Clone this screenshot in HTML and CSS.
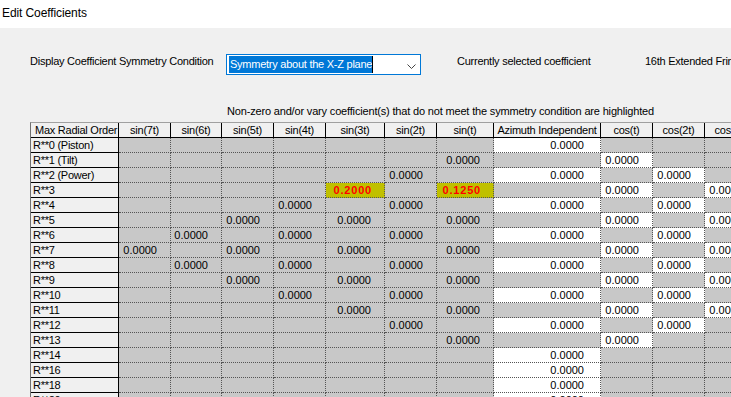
FILE: index.html
```html
<!DOCTYPE html>
<html>
<head>
<meta charset="utf-8">
<link rel="stylesheet" href="styles.css">
</head>
<body>
<div class="titlebar">Edit Coefficients</div>
<div class="toprow">
  <div class="lbl lbl-sym">Display Coefficient Symmetry Condition</div>
  <div class="combo">
    <span class="sel">Symmetry about the X-Z plane</span><span class="caret"></span>
    <svg class="chev" width="9" height="5" viewBox="0 0 9 5"><polyline points="0.5,0.5 4.5,4.5 8.5,0.5" fill="none" stroke="#444" stroke-width="1"/></svg>
  </div>
  <div class="lbl lbl-cur">Currently selected coefficient</div>
  <div class="lbl lbl-ext">16th Extended Fringe</div>
</div>
<div class="note">Non-zero and/or vary coefficient(s) that do not meet the symmetry condition are highlighted</div>
<div class="grid">
  <div class="ghead">
    <div>Max Radial Order</div><div>sin(7t)</div><div>sin(6t)</div><div>sin(5t)</div><div>sin(4t)</div><div>sin(3t)</div><div>sin(2t)</div><div>sin(t)</div><div>Azimuth Independent</div><div>cos(t)</div><div>cos(2t)</div><div>cos(3t)</div>
  </div>
  <div class="gbody">
    <div>R**0 (Piston)</div><div></div><div></div><div></div><div></div><div></div><div></div><div></div><div class="w">0.0000</div><div></div><div></div><div></div>
    <div>R**1 (Tilt)</div><div></div><div></div><div></div><div></div><div></div><div></div><div>0.0000</div><div></div><div class="w">0.0000</div><div></div><div></div>
    <div>R**2 (Power)</div><div></div><div></div><div></div><div></div><div></div><div>0.0000</div><div></div><div class="w">0.0000</div><div></div><div class="w">0.0000</div><div></div>
    <div>R**3</div><div></div><div></div><div></div><div></div><div class="h">0.2000</div><div></div><div class="h">0.1250</div><div></div><div class="w">0.0000</div><div></div><div class="w">0.0000</div>
    <div>R**4</div><div></div><div></div><div></div><div>0.0000</div><div></div><div>0.0000</div><div></div><div class="w">0.0000</div><div></div><div class="w">0.0000</div><div></div>
    <div>R**5</div><div></div><div></div><div>0.0000</div><div></div><div>0.0000</div><div></div><div>0.0000</div><div></div><div class="w">0.0000</div><div></div><div class="w">0.0000</div>
    <div>R**6</div><div></div><div>0.0000</div><div></div><div>0.0000</div><div></div><div>0.0000</div><div></div><div class="w">0.0000</div><div></div><div class="w">0.0000</div><div></div>
    <div>R**7</div><div>0.0000</div><div></div><div>0.0000</div><div></div><div>0.0000</div><div></div><div>0.0000</div><div></div><div class="w">0.0000</div><div></div><div class="w">0.0000</div>
    <div>R**8</div><div></div><div>0.0000</div><div></div><div>0.0000</div><div></div><div>0.0000</div><div></div><div class="w">0.0000</div><div></div><div class="w">0.0000</div><div></div>
    <div>R**9</div><div></div><div></div><div>0.0000</div><div></div><div>0.0000</div><div></div><div>0.0000</div><div></div><div class="w">0.0000</div><div></div><div class="w">0.0000</div>
    <div>R**10</div><div></div><div></div><div></div><div>0.0000</div><div></div><div>0.0000</div><div></div><div class="w">0.0000</div><div></div><div class="w">0.0000</div><div></div>
    <div>R**11</div><div></div><div></div><div></div><div></div><div>0.0000</div><div></div><div>0.0000</div><div></div><div class="w">0.0000</div><div></div><div class="w">0.0000</div>
    <div>R**12</div><div></div><div></div><div></div><div></div><div></div><div>0.0000</div><div></div><div class="w">0.0000</div><div></div><div class="w">0.0000</div><div></div>
    <div>R**13</div><div></div><div></div><div></div><div></div><div></div><div></div><div>0.0000</div><div></div><div class="w">0.0000</div><div></div><div></div>
    <div>R**14</div><div></div><div></div><div></div><div></div><div></div><div></div><div></div><div class="w">0.0000</div><div></div><div></div><div></div>
    <div>R**16</div><div></div><div></div><div></div><div></div><div></div><div></div><div></div><div class="w">0.0000</div><div></div><div></div><div></div>
    <div>R**18</div><div></div><div></div><div></div><div></div><div></div><div></div><div></div><div class="w">0.0000</div><div></div><div></div><div></div>
    <div>R**20</div><div></div><div></div><div></div><div></div><div></div><div></div><div></div><div class="w">0.0000</div><div></div><div></div><div></div>
  </div>
</div>
</body>
</html>
```
FILE: styles.css
```css
html, body {
  margin: 0;
  padding: 0;
}
body {
  width: 731px;
  height: 397px;
  overflow: hidden;
  background: #f0f0f0;
  color: #000;
  font-family: "Liberation Sans", Arial, sans-serif;
  font-size: 11px;
  letter-spacing: -0.25px;
}
.titlebar {
  height: 28px;
  box-sizing: border-box;
  background: #fff;
  padding: 6px 0 0 2px;
  font-size: 12px;
  line-height: 14px;
  letter-spacing: -0.1px;
}
.toprow {
  display: flex;
  align-items: flex-start;
  margin-top: 26px;
  height: 21px;
  padding-left: 30px;
}
.toprow > * {
  flex-shrink: 0;
}
.lbl {
  margin-top: 1px;
  line-height: 13px;
  white-space: nowrap;
}
.lbl-sym {
  width: 196px;
}
.combo {
  width: 195px;
  height: 21px;
  box-sizing: border-box;
  border: 1px solid #0078d7;
  background: #fff;
  padding: 1px 4px 0 2px;
  display: flex;
  align-items: flex-start;
}
.sel {
  background: #0078d7;
  color: #fff;
  height: 17px;
  line-height: 17px;
  padding-left: 1px;
  white-space: nowrap;
}
.caret {
  width: 1px;
  height: 17px;
  background: #000;
}
.chev {
  margin-left: auto;
  margin-top: 8px;
}
.lbl-cur {
  margin-left: 36px;
  width: 188px;
}
.note {
  margin-top: 30px;
  padding-left: 227px;
  line-height: 13px;
  white-space: nowrap;
  letter-spacing: -0.17px;
}
.grid {
  margin: 4px 0 0 30px;
  width: max-content;
  border-left: 1px solid #707070;
  border-top: 1px solid #a0a0a0;
}
.ghead, .gbody {
  display: grid;
  grid-template-columns: 88px 52px 51px 52px 52px 59px 52px 57px 107px 52px 52px 52px;
  grid-auto-rows: 15px;
}
.ghead > div {
  box-sizing: border-box;
  background: #f0f0f0;
  border-right: 1px solid #000;
  border-bottom: 1px solid #000;
  line-height: 14px;
  text-align: center;
  white-space: nowrap;
  overflow: hidden;
}
.ghead > div:first-child {
  text-align: left;
  padding-left: 4px;
}
.gbody > div {
  box-sizing: border-box;
  background: #c8c8c8;
  border-right: 1px dotted #555;
  border-bottom: 1px dotted #555;
  line-height: 14px;
  text-align: right;
  padding-right: 13px;
  letter-spacing: 0;
  white-space: nowrap;
  overflow: hidden;
}
.gbody > div:nth-child(12n+1) {
  background: #f0f0f0;
  border-right: 1px solid #000;
  border-bottom: 1px solid #000;
  text-align: left;
  padding-left: 2px;
  padding-right: 0;
  letter-spacing: -0.25px;
}
.gbody > div:nth-child(12n+9) {
  padding-right: 16px;
}
.gbody > div.w {
  background: #fff;
}
.gbody > div.h {
  background: #c0c000;
  color: #ff0000;
  font-weight: bold;
  letter-spacing: 0.8px;
  padding-right: 12px;
}
```
